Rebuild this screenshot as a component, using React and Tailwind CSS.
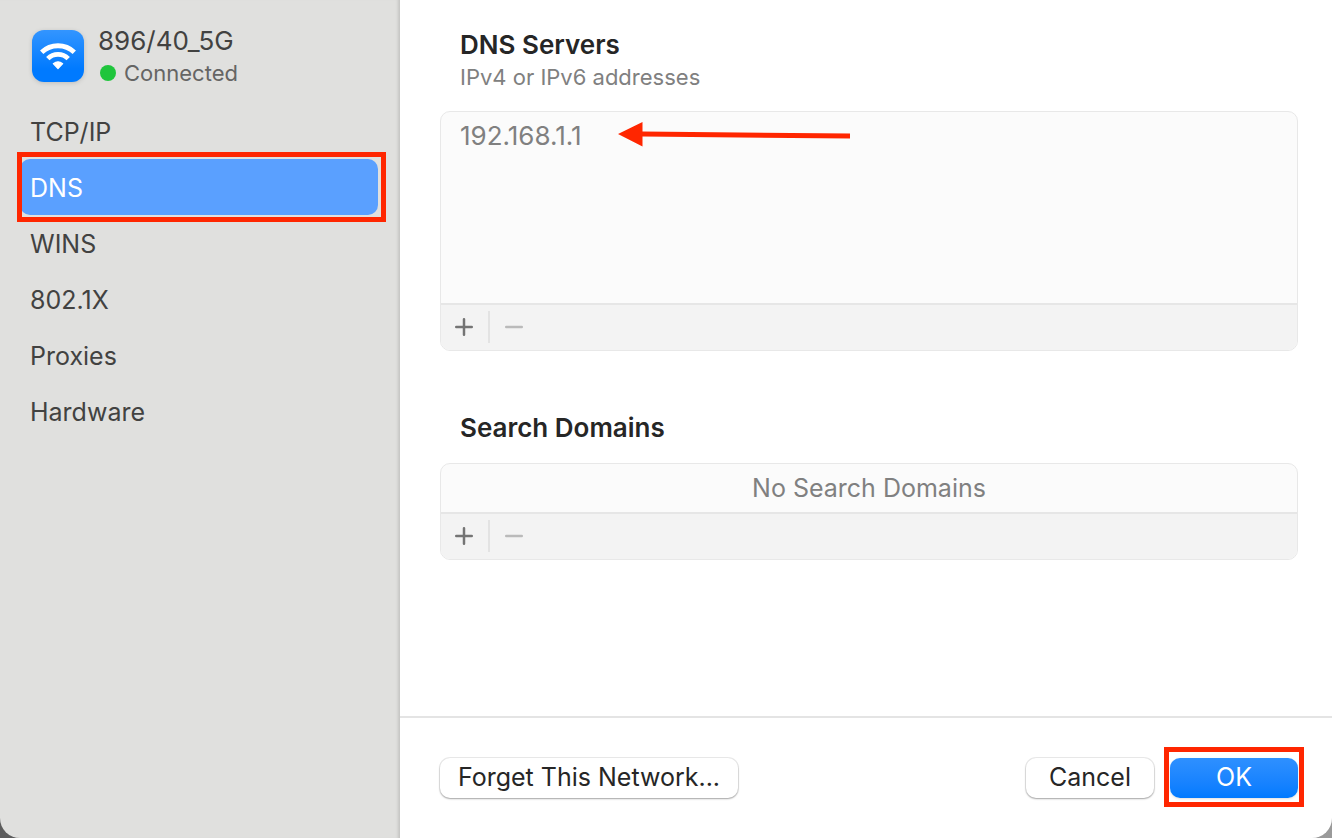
import { useState } from "react";

const TABS = ["TCP/IP", "DNS", "WINS", "802.1X", "Proxies", "Hardware"];

const WifiIcon = () => (
  <svg viewBox="0 0 52 52" className="size-[52px] shrink-0 drop-shadow-sm" aria-hidden="true">
    <defs>
      <linearGradient id="wifi-bg" x1="0" y1="0" x2="0" y2="1">
        <stop offset="0" stopColor="#3395ff" />
        <stop offset="0.75" stopColor="#007aff" />
      </linearGradient>
    </defs>
    <rect width="52" height="52" rx="12" fill="url(#wifi-bg)" />
    <g fill="none" stroke="#fff" strokeWidth="4.8">
      <path d="M9.700 22.300a23.600 23.600 0 0 1 32.600 0" />
      <path d="M15.800 28.600a14.600 14.600 0 0 1 20.400 0" />
    </g>
    <path
      d="M26 38.500l-4.700-4.800a7.600 7.600 0 0 1 9.400 0z"
      fill="#fff"
      stroke="#fff"
      strokeWidth="1.2"
      strokeLinejoin="round"
    />
  </svg>
);

const Arrow = () => (
  <svg viewBox="0 0 232 26" className="w-[232px] h-[26px] shrink-0 overflow-visible" aria-hidden="true">
    <path d="M0 11L24.500 -1V8.500L232 10.500V15.500L24.500 13.500V23.500z" fill="#ff2600" />
  </svg>
);

// Red outline drawn around the control it sits in
const Highlight = ({ className }) => (
  <span className={`absolute border-[5px] border-[#ff2600] pointer-events-none ${className}`} />
);

const ListBox = ({ label, children }) => (
  <div className="border border-[#e8e8e8] rounded-[10px] bg-[#fbfbfb] overflow-hidden">
    {children}
    <div className="flex items-center h-[47px] pb-0.5 border-t-2 border-[#e6e6e6] bg-[#f3f3f3]">
      <button
        type="button"
        aria-label={`Add to ${label}`}
        className="w-[49px] h-8 pr-0.5 flex items-center justify-center border-r-2 border-[#e3e3e3]"
      >
        <svg viewBox="0 0 18 18" className="size-[18px]" stroke="#747474" strokeWidth="2.5" strokeLinecap="round">
          <path d="M1.250 9h15.500M9 1.250v15.500" />
        </svg>
      </button>
      <button
        type="button"
        disabled
        aria-label={`Remove from ${label}`}
        className="w-12 h-8 flex items-center justify-center"
      >
        <svg viewBox="0 0 18 18" className="size-[18px]" stroke="#bababa" strokeWidth="2.5" strokeLinecap="round">
          <path d="M1.250 9h15.500" />
        </svg>
      </button>
    </div>
  </div>
);

const App = () => {
  const [active, setActive] = useState("DNS");

  return (
    <div className="min-h-screen flex bg-linear-to-r from-[#5c5c5c] to-[#9a9a9a] font-['Inter',sans-serif] text-[25px] leading-8">
      <aside className="w-[400px] shrink-0 bg-[#e0e0de] border-r border-[#c8c8c6] shadow-[inset_-3px_0_3px_-2px_rgba(0,0,0,0.12)] rounded-bl-[20px] text-[#424241]">
        <div className="flex items-center gap-[14px] pl-8 pt-[23px] pb-[14px]">
          <WifiIcon />
          <div className="pt-0.5">
            <p className="text-[26px]">896/40_5G</p>
            <p className="flex items-center gap-2 text-[22px] text-[#656564]">
              <span className="size-4 ml-0.5 rounded-full bg-[#1fc53c]" />
              Connected
            </p>
          </div>
        </div>

        <nav className="pl-5 pr-[21px]">
          {TABS.map((tab) => (
            <button
              key={tab}
              type="button"
              onClick={() => setActive(tab)}
              className={`relative block w-full h-14 px-[10px] pt-0.5 text-left rounded-[10px] ${
                tab === active ? "bg-[#5aa0ff] text-white" : ""
              }`}
            >
              {tab}
              {tab === active && <Highlight className="-inset-y-[7px] -left-[3px] -right-2" />}
            </button>
          ))}
        </nav>
      </aside>

      <main className="flex-1 min-w-0 flex flex-col bg-white rounded-br-[20px] text-[#262626]">
        <div className="flex-1 pl-10 pr-[34px] pt-[29px]">
          <section>
            <div className="px-5 mb-[18px]">
              <h2 className="text-[26px] font-semibold">DNS Servers</h2>
              <p className="text-[22px] text-[#808080]">IPv4 or IPv6 addresses</p>
            </div>
            <ListBox label="DNS Servers">
              <ul className="h-[191px] px-[19px] py-2 text-[26px] text-[#808080]">
                <li className="flex items-center gap-9">
                  192.168.1.1
                  <Arrow />
                </li>
              </ul>
            </ListBox>
          </section>

          <section className="mt-[61px]">
            <h2 className="px-5 mb-[19px] text-[26px] font-semibold">Search Domains</h2>
            <ListBox label="Search Domains">
              <p className="py-2 text-center text-[#808080]">No Search Domains</p>
            </ListBox>
          </section>
        </div>

        <footer className="flex items-center gap-4 h-[122px] pl-10 pr-[34px] border-t-2 border-[#e4e4e4]">
          <button
            type="button"
            className="h-10 px-4 pb-0.5 mr-auto min-w-[298px] rounded-[10px] bg-white shadow-[0_0_0_1px_rgba(0,0,0,0.08),0_1px_2px_rgba(0,0,0,0.3)]"
          >
            Forget This Network...
          </button>
          <button
            type="button"
            className="w-32 h-10 pb-0.5 rounded-[10px] bg-white shadow-[0_0_0_1px_rgba(0,0,0,0.08),0_1px_2px_rgba(0,0,0,0.3)]"
          >
            Cancel
          </button>
          <button
            type="button"
            className="relative w-32 h-10 pb-0.5 rounded-[10px] bg-linear-to-b from-[#2e90ff] to-[#007aff] text-white shadow-sm"
          >
            OK
            <Highlight className="-inset-x-[6px] -top-[11px] -bottom-[9px]" />
          </button>
        </footer>
      </main>
    </div>
  );
};

export default App;
